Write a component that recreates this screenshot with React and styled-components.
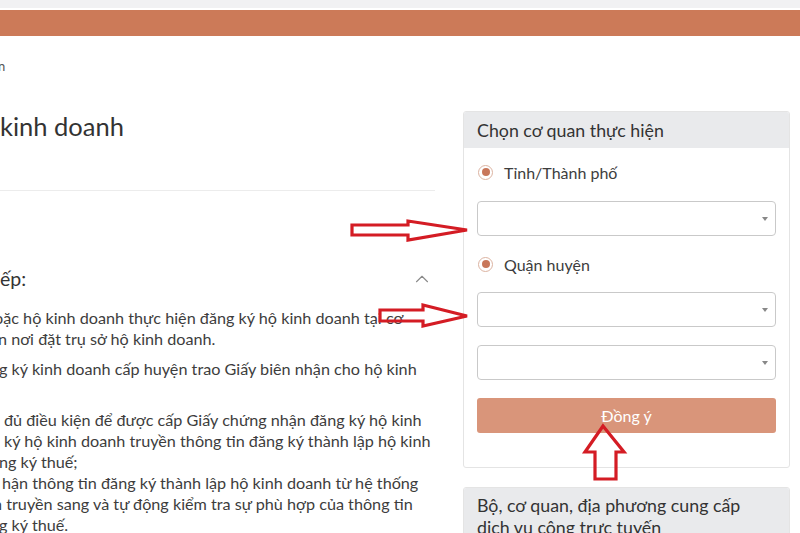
import React from 'react';
import styled, {createGlobalStyle} from "styled-components";
import {ChevronUp} from "lucide-react";

const GlobalStyle = createGlobalStyle`
  html, body {
    margin: 0;
    padding: 0;
    background: #fff;
    overflow: hidden;
  }
  body {
    font-family: Lato, "Open Sans", sans-serif;
    color: #3a3a3a;
  }
`;

const Page = styled.div`
  position: relative;
  width: 800px;
  height: 533px;
  overflow: hidden;
`;

const TopStrip = styled.div`
  height: 8px;
  background: #f1f1f3;
  border-bottom: 2px solid #fff;
`;

const NavBar = styled.div`
  height: 26px;
  background: #cc7a58;
`;

const Main = styled.div`
  display: flex;
  gap: 28px;
  padding-right: 10px;
`;

const Left = styled.div`
  width: 435px;
  flex: none;
  overflow: hidden;
`;

const Crumb = styled.div`
  margin: 21px 0 0 -2px;
  font-size: 13px;
  line-height: 18px;
  color: #555;
`;

const Title = styled.h1`
  margin: 36px 0 0;
  font-size: 25.5px;
  line-height: 30px;
  font-weight: 400;
  color: #333;
`;

const Divider = styled.hr`
  margin: 49px 0 0;
  border: 0;
  border-top: 1px solid #ececec;
`;

const SectionHead = styled.div`
  margin-top: 76px;
  display: flex;
  align-items: center;
  justify-content: space-between;
  padding-right: 2px;
  font-size: 19.5px;
  line-height: 24px;
  color: #333;
  svg {
    color: #8a8a8a;
  }
`;

const Para = styled.div`
  margin-top: ${p => p.$first ? 16 : 9}px;
  font-size: 16.2px;
  line-height: 21px;
  color: #3d3d3d;
`;

const Line = styled.div`
  white-space: nowrap;
  margin-left: ${p => p.$shift || 0}px;
  min-height: 21px;
`;

const Right = styled.div`
  width: 327px;
  flex: none;
  padding-top: 75px;
  display: flex;
  flex-direction: column;
  gap: 19px;
`;

const Card = styled.div`
  border: 1px solid #e4e4e4;
  border-radius: 3px;
  background: #fff;
  overflow: hidden;
`;

const CardHead = styled.div`
  background: #e9eaec;
  padding: ${p => p.$tall ? '6px 13px 0' : '0 13px'};
  height: ${p => p.$tall ? 'auto' : '36px'};
  display: flex;
  align-items: center;
  font-size: 17.8px;
  line-height: 22px;
  color: #333;
`;

const CardBody = styled.div`
  padding: 14px 13px 34px;
  display: flex;
  flex-direction: column;
  gap: 18px;
`;

const RadioRow = styled.label`
  display: flex;
  align-items: center;
  gap: 11px;
  height: 20px;
  margin-bottom: ${p => p.$first ? 1 : 0}px;
  font-size: 16px;
  color: #3d3d3d;
`;

const Radio = styled.span`
  width: 13px;
  height: 13px;
  border-radius: 50%;
  border: 1px solid #dcb3a1;
  display: flex;
  align-items: center;
  justify-content: center;
  margin-left: 1px;
  &::after {
    content: "";
    width: 8px;
    height: 8px;
    border-radius: 50%;
    background: #c8775a;
  }
`;

const Select = styled.div`
  height: 33px;
  border: 1px solid #c9c9c9;
  border-radius: 4px;
  display: flex;
  align-items: center;
  justify-content: flex-end;
  padding-right: 7px;
  &::after {
    content: "";
    border-left: 3.5px solid transparent;
    border-right: 3.5px solid transparent;
    border-top: 4px solid #888;
  }
`;

const Button = styled.button`
  height: 35px;
  border: 0;
  border-radius: 3px;
  background: #d9957a;
  color: #fff;
  font-family: inherit;
  font-size: 16px;
`;

const Overlay = styled.svg`
  position: absolute;
  left: 0;
  top: 0;
  pointer-events: none;
`;

const Arrow = styled.polygon`
  fill: none;
  stroke: #d41c24;
  stroke-width: 3.2;
  stroke-linejoin: miter;
`;

export default function App() {
    return (
        <Page>
            <GlobalStyle/>
            <TopStrip/>
            <NavBar/>
            <Main>
                <Left>
                    <Crumb>n</Crumb>
                    <Title>kinh doanh</Title>
                    <Divider/>
                    <SectionHead>
                        <span>ếp:</span>
                        <ChevronUp size={22} strokeWidth={1.2}/>
                    </SectionHead>
                    <Para $first>
                        <Line $shift={-6}>oặc hộ kinh doanh thực hiện đăng ký hộ kinh doanh tại cơ</Line>
                        <Line $shift={-2}>n nơi đặt trụ sở hộ kinh doanh.</Line>
                    </Para>
                    <Para>
                        <Line $shift={-1}>g ký kinh doanh cấp huyện trao Giấy biên nhận cho hộ kinh</Line>
                        <Line/>
                    </Para>
                    <Para>
                        <Line $shift={4}>đủ điều kiện để được cấp Giấy chứng nhận đăng ký hộ kinh</Line>
                        <Line $shift={4}>ký hộ kinh doanh truyền thông tin đăng ký thành lập hộ kinh</Line>
                        <Line $shift={-1}>ng ký thuế;</Line>
                        <Line $shift={2}>hận thông tin đăng ký thành lập hộ kinh doanh từ hệ thống</Line>
                        <Line $shift={-7}>n truyền sang và tự động kiểm tra sự phù hợp của thông tin</Line>
                        <Line $shift={-1}>g ký thuế.</Line>
                    </Para>
                </Left>
                <Right>
                    <Card>
                        <CardHead>Chọn cơ quan thực hiện</CardHead>
                        <CardBody>
                            <RadioRow $first><Radio/>Tỉnh/Thành phố</RadioRow>
                            <Select/>
                            <RadioRow><Radio/>Quận huyện</RadioRow>
                            <Select/>
                            <Select/>
                            <Button>Đồng ý</Button>
                        </CardBody>
                    </Card>
                    <Card>
                        <CardHead $tall>Bộ, cơ quan, địa phương cung cấp dịch vụ công trực tuyến</CardHead>
                    </Card>
                </Right>
            </Main>
            <Overlay width="800" height="533" viewBox="0 0 800 533">
                <Arrow points="352,225 408,225 408,221 467,230 408,240 408,235 352,235"/>
                <Arrow points="380,310 423,310 423,305 467,316 423,326 423,321 380,321"/>
                <Arrow points="603,426 624,452 616,452 616,479 595,479 595,452 585,452"/>
            </Overlay>
        </Page>
    );
}
